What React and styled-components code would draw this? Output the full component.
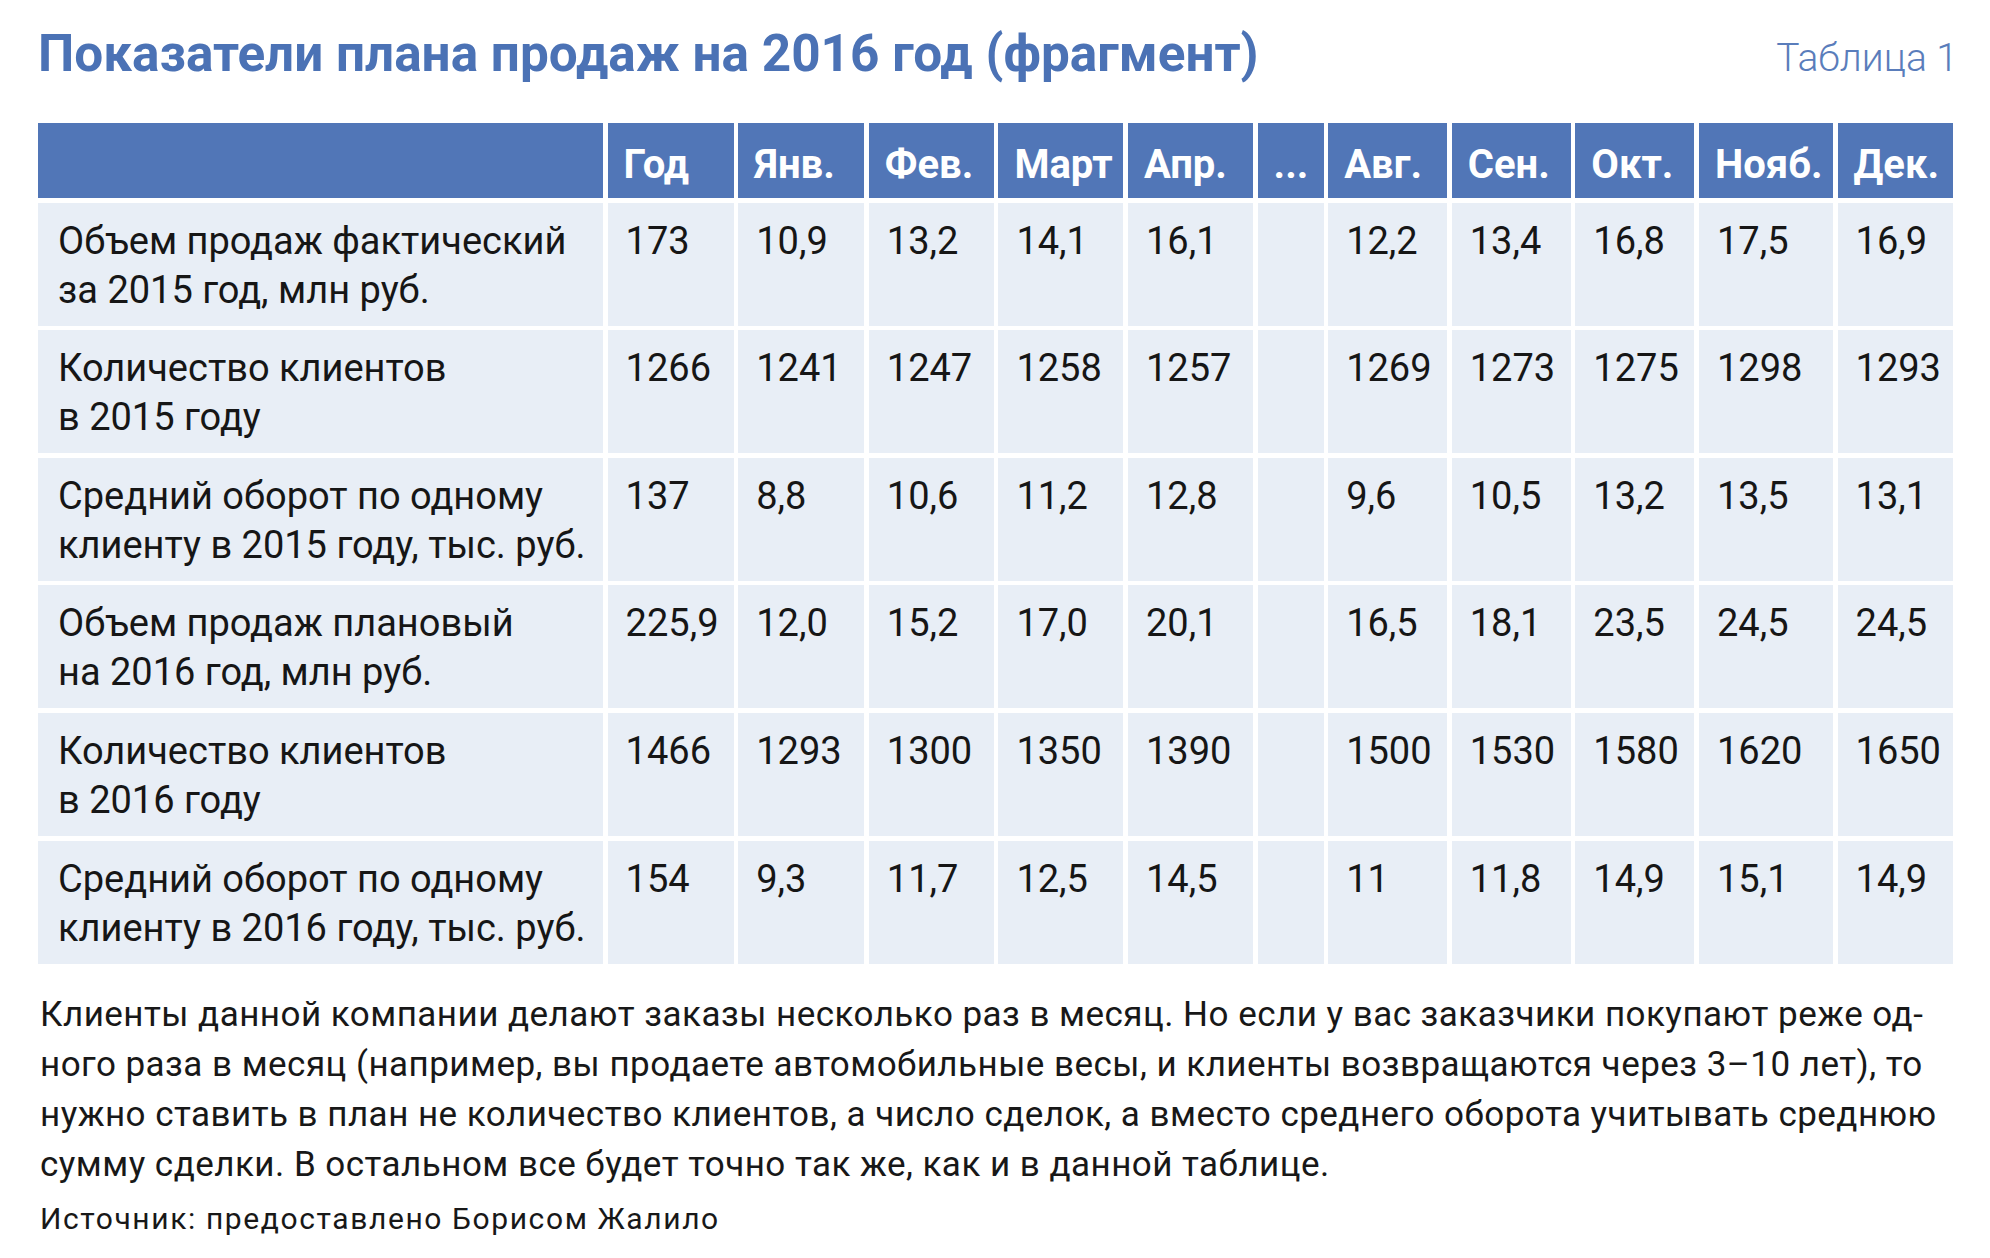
import React from "react";
import styled, { createGlobalStyle } from "styled-components";

const GlobalStyle = createGlobalStyle`
  html, body {
    margin: 0;
    padding: 0;
    background: #ffffff;
  }
  body {
    font-family: Roboto, "Liberation Sans", sans-serif;
    color: #1b1b1b;
  }
`;

const Page = styled.div`
  width: 1990px;
  min-height: 1258px;
  box-sizing: border-box;
  padding: 26px 37px 0 38px;
`;

const TitleBar = styled.div`
  display: flex;
  justify-content: space-between;
  align-items: baseline;
  margin-bottom: 42px;
`;

const Title = styled.h1`
  margin: 0;
  font-size: 51.3px;
  line-height: 55px;
  font-weight: 700;
  color: #4b72b5;
`;

const TableNo = styled.span`
  font-size: 39px;
  font-weight: 300;
  color: #5a7dbb;
  margin-right: -5px;
`;

const Table = styled.div`
  display: grid;
  grid-template-columns: 565px 126px 126px 125px 125px 125px 66px 119px 119px 119px 134px 115px;
  grid-auto-rows: 123px;
  grid-template-rows: 75px;
  gap: 4.6px;
`;

const Head = styled.div`
  background: #5176b7;
  color: #ffffff;
  font-size: 40px;
  line-height: 42px;
  font-weight: 700;
  padding: 21px 0 0 16px;
  white-space: nowrap;
  overflow: hidden;
`;

const Cell = styled.div`
  background: #e8eef6;
  font-size: 38px;
  line-height: 49px;
  padding: 14px 0 0 ${(p) => (p.$label ? "20px" : "18px")};
  white-space: nowrap;
  overflow: hidden;
  color: #161616;
`;

const Note = styled.div`
  margin-top: 26px;
  padding-left: 2px;
  font-size: 35px;
  line-height: 50px;
  letter-spacing: 0.47px;
  color: #181818;
`;

const NoteLine = styled.div`
  white-space: nowrap;
`;

const Source = styled.div`
  margin-top: 4px;
  padding-left: 2px;
  font-size: 30px;
  line-height: 50px;
  letter-spacing: 1.6px;
  color: #181818;
`;

const heads = ["", "Год", "Янв.", "Фев.", "Март", "Апр.", "...", "Авг.", "Сен.", "Окт.", "Нояб.", "Дек."];

const rows = [
  {
    label: ["Объем продаж фактический", "за 2015 год, млн руб."],
    values: ["173", "10,9", "13,2", "14,1", "16,1", "", "12,2", "13,4", "16,8", "17,5", "16,9"],
  },
  {
    label: ["Количество клиентов", "в 2015 году"],
    values: ["1266", "1241", "1247", "1258", "1257", "", "1269", "1273", "1275", "1298", "1293"],
  },
  {
    label: ["Средний оборот по одному", "клиенту в 2015 году, тыс. руб."],
    values: ["137", "8,8", "10,6", "11,2", "12,8", "", "9,6", "10,5", "13,2", "13,5", "13,1"],
  },
  {
    label: ["Объем продаж плановый", "на 2016 год, млн руб."],
    values: ["225,9", "12,0", "15,2", "17,0", "20,1", "", "16,5", "18,1", "23,5", "24,5", "24,5"],
  },
  {
    label: ["Количество клиентов", "в 2016 году"],
    values: ["1466", "1293", "1300", "1350", "1390", "", "1500", "1530", "1580", "1620", "1650"],
  },
  {
    label: ["Средний оборот по одному", "клиенту в 2016 году, тыс. руб."],
    values: ["154", "9,3", "11,7", "12,5", "14,5", "", "11", "11,8", "14,9", "15,1", "14,9"],
  },
];

const noteLines = [
  "Клиенты данной компании делают заказы несколько раз в месяц. Но если у вас заказчики покупают реже од-",
  "ного раза в месяц (например, вы продаете автомобильные весы, и клиенты возвращаются через 3–10 лет), то",
  "нужно ставить в план не количество клиентов, а число сделок, а вместо среднего оборота учитывать среднюю",
  "сумму сделки. В остальном все будет точно так же, как и в данной таблице.",
];

export default function App() {
  return (
    <>
      <GlobalStyle />
      <Page>
        <TitleBar>
          <Title>Показатели плана продаж на 2016 год (фрагмент)</Title>
          <TableNo>Таблица 1</TableNo>
        </TitleBar>

        <Table>
          {heads.map((h, i) => (
            <Head key={"h" + i}>{h}</Head>
          ))}
          {rows.map((r, ri) => (
            <React.Fragment key={ri}>
              <Cell $label>
                {r.label[0]}
                <br />
                {r.label[1]}
              </Cell>
              {r.values.map((v, vi) => (
                <Cell key={vi}>{v}</Cell>
              ))}
            </React.Fragment>
          ))}
        </Table>

        <Note>
          {noteLines.map((l, i) => (
            <NoteLine key={i}>{l}</NoteLine>
          ))}
        </Note>
        <Source>Источник: предоставлено Борисом Жалило</Source>
      </Page>
    </>
  );
}
